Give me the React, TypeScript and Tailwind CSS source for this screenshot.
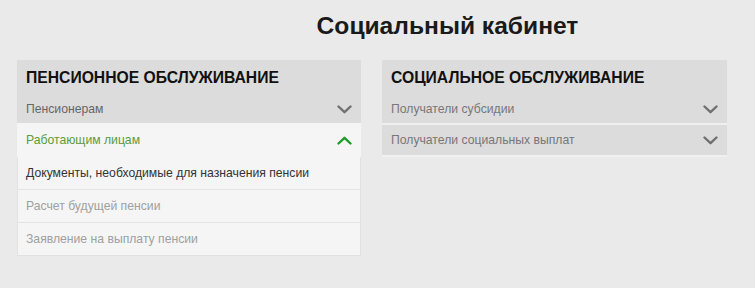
const Chevron = ({ up = false, color }: { up?: boolean; color: string }) => (
  <svg width="15" height="9" viewBox="0 0 15 9" fill="none" className="shrink-0">
    <path
      d={up ? "M1.5 7.5 L7.5 1.8 L13.5 7.5" : "M1.5 1.5 L7.5 7.2 L13.5 1.5"}
      stroke={color}
      strokeWidth="2.4"
      strokeLinecap="round"
      strokeLinejoin="round"
    />
  </svg>
);

const App = () => {
  return (
    <div
      className="w-[755px] h-[288px] bg-[#eaeaea] overflow-hidden"
      style={{ fontFamily: '"Liberation Sans", Arial, sans-serif' }}
    >
      <h1 className="pl-[140px] pt-[12px] h-[60px] text-center text-[24.6px] leading-[28px] font-bold text-[#1a1a1a]">
        Социальный кабинет
      </h1>

      <div className="flex gap-[21px] pl-[17px]">
        {/* left panel */}
        <div className="w-[344px] flex flex-col">
          <div className="h-[35px] bg-[#dcdcdc] px-[9px] flex items-center pt-[1px]">
            <span className="text-[15.7px] font-bold text-[#111]">ПЕНСИОННОЕ ОБСЛУЖИВАНИЕ</span>
          </div>
          <div className="h-[28px] bg-[#dcdcdc] pl-[9px] pr-[9px] flex items-center justify-between">
            <span className="text-[12.2px] text-[#666]">Пенсионерам</span>
            <Chevron color="#707070" />
          </div>
          <div className="h-[34px] bg-[#f5f5f5] pl-[9px] pr-[9px] flex items-center justify-between">
            <span className="text-[12.2px] text-[#5b9c3c]">Работающим лицам</span>
            <Chevron up color="#1f9a2c" />
          </div>
          <div className="bg-[#f5f5f5] border border-t-0 border-[#e2e2e2] flex flex-col">
            <div className="h-[33px] pl-[8px] flex items-center border-b border-[#e4e4e4]">
              <span className="text-[12.2px] text-[#333]">Документы, необходимые для назначения пенсии</span>
            </div>
            <div className="h-[33px] pl-[8px] flex items-center border-b border-[#e4e4e4]">
              <span className="text-[12.2px] text-[#a0a0a0]">Расчет будущей пенсии</span>
            </div>
            <div className="h-[32px] pl-[8px] flex items-center">
              <span className="text-[12.2px] text-[#a0a0a0]">Заявление на выплату пенсии</span>
            </div>
          </div>
        </div>

        {/* right panel */}
        <div className="w-[345px] flex flex-col">
          <div className="h-[35px] bg-[#dcdcdc] px-[9px] flex items-center pt-[1px]">
            <span className="text-[15.7px] font-bold text-[#111]">СОЦИАЛЬНОЕ ОБСЛУЖИВАНИЕ</span>
          </div>
          <div className="h-[28px] bg-[#dcdcdc] px-[9px] flex items-center justify-between">
            <span className="text-[12.2px] text-[#777]">Получатели субсидии</span>
            <Chevron color="#707070" />
          </div>
          <div className="h-[2px] bg-[#f0f0f0]" />
          <div className="h-[30px] bg-[#dcdcdc] px-[9px] flex items-center justify-between">
            <span className="text-[12.2px] text-[#777]">Получатели социальных выплат</span>
            <Chevron color="#707070" />
          </div>
          <div className="h-[2px] bg-[#f0f0f0]" />
        </div>
      </div>
    </div>
  );
};

export default App;
